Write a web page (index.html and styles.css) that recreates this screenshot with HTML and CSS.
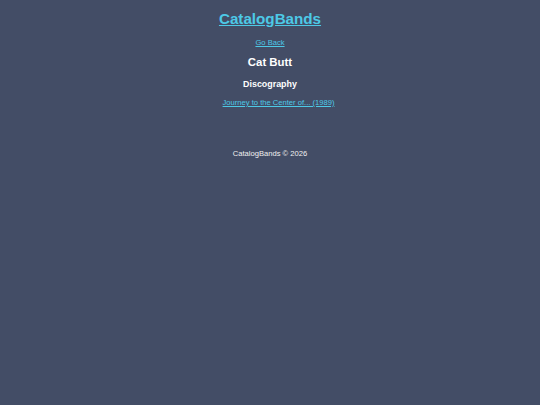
FILE: index.html
```html
<!DOCTYPE html>
<html>
<head>
<meta charset="utf-8">
<link rel="stylesheet" href="styles.css">
</head>
<body>
<header class="top">
  <a class="brand" href="#">CatalogBands</a>
</header>
<main class="main">
  <a class="back" href="#">Go Back</a>
  <h1 class="band">Cat Butt</h1>
  <h2 class="section">Discography</h2>
  <ul class="albums">
    <li><a href="#">Journey to the Center of... (1989)</a></li>
  </ul>
</main>
<footer class="foot">CatalogBands © 2026</footer>
</body>
</html>
```
FILE: styles.css
```css
html, body {
  margin: 0;
  padding: 0;
  background: #434d66;
  height: 100%;
}
body {
  font-family: "Liberation Sans", Arial, sans-serif;
  color: #ffffff;
  font-size: 7.6px;
  text-align: center;
}
.top {
  padding-top: 10px;
  line-height: 18px;
}
.brand {
  font-size: 15.2px;
  font-weight: bold;
  color: #4dc9e6;
}
.main {
  display: flex;
  flex-direction: column;
  align-items: center;
  padding-top: 7px;
}
.back {
  color: #4dc9e6;
  line-height: 10px;
}
.band {
  margin: 7px 0 0;
  font-size: 11.4px;
  line-height: 14px;
}
.section {
  margin: 9.5px 0 0;
  font-size: 8.9px;
  line-height: 11px;
}
.albums {
  list-style: none;
  margin: 8.5px 0 0;
  padding: 0 0 0 17px;
  line-height: 10px;
}
.albums a {
  color: #4dc9e6;
}
.foot {
  margin-top: 41px;
  line-height: 10px;
  color: #f0f0f0;
}
```
